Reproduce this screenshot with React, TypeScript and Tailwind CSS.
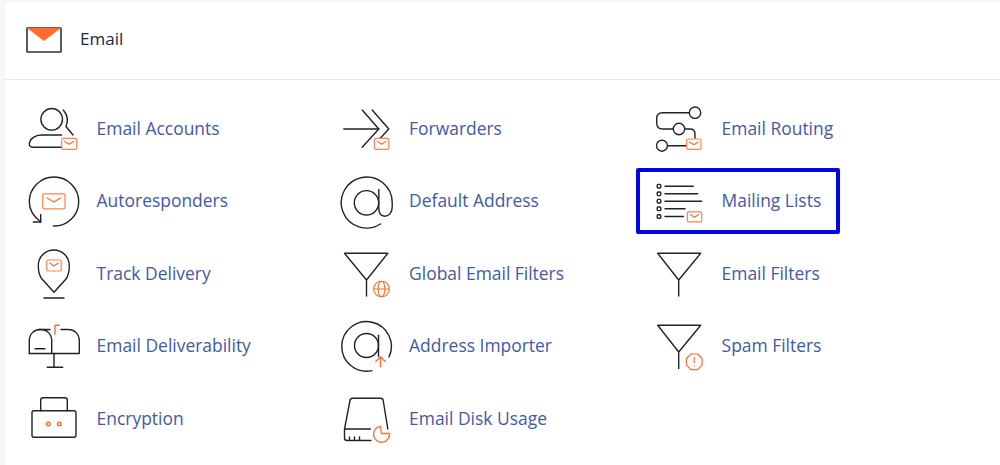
import React from 'react';

const ORANGE = '#ff6c2c';

// small envelope badge used on most of the icons
const Mail = ({ x, y, w, h }: { x: number; y: number; w: number; h: number }) => (
  <g stroke={ORANGE} fill="none" strokeWidth="1.2">
    <rect x={x} y={y} width={w} height={h} rx="1.6" fill="#fff" strokeOpacity="0.85" />
    <path d={`M${x + w * 0.2} ${y + h * 0.28} L${x + w / 2} ${y + h * 0.55} L${x + w * 0.8} ${y + h * 0.28}`} />
  </g>
);

const Icon = ({ children }: { children: React.ReactNode }) => (
  <svg width="60" height="60" viewBox="0 0 60 60" fill="none" stroke="#222" strokeWidth="1.4" strokeLinecap="round" strokeLinejoin="round" className="shrink-0">
    {children}
  </svg>
);

const EmailAccounts = () => (
  <Icon>
    <circle cx="27.7" cy="21.3" r="10.8" />
    <path d="M39.3 12 C43.5 17 44.5 23 42 28.5 L49 37" />
    <path d="M37.5 37 H17.5 C11 37 5.5 41 5.3 46 C5.2 48 6.5 49.2 8.5 49.2 H37.5" />
    <Mail x={37.7} y={40.3} w={15} h={11} />
  </Icon>
);

const Forwarders = () => (
  <Icon>
    <path d="M6.8 31 H41.8" />
    <path d="M25.2 12 L41.8 31 L25.2 49.3" />
    <path d="M35.2 12 L51.8 31 L43.5 40" />
    <Mail x={37.5} y={40.3} w={14.3} h={11} />
  </Icon>
);

const EmailRouting = () => (
  <Icon>
    <circle cx="46" cy="14.7" r="5.7" />
    <path d="M40.3 14.7 H13.5 C10 14.7 7.7 17 7.7 20.5 V25 C7.7 28.7 10 31 13.5 31 H24.3" />
    <circle cx="30" cy="31" r="5.7" />
    <path d="M35.7 31 H41 C44 31 46 33 46 36 V40" />
    <circle cx="13" cy="47.7" r="5.5" />
    <path d="M18.5 47.7 H37" />
    <Mail x={37.7} y={41} w={14.3} h={10.3} />
  </Icon>
);

const Autoresponders = () => (
  <Icon>
    <path d="M29.5 56 C43 56.5 54.7 45.5 54.7 31.7 C54.7 18 43.5 7 30 7 C16.5 7 5.3 18 5.3 31.7 C5.3 39 9.5 46.5 16.7 51.8" />
    <path d="M16.7 44.5 V52 H9.3" />
    <Mail x={18.7} y={23.8} w={22.3} h={15} />
  </Icon>
);

const DefaultAddress = () => (
  <Icon>
    <circle cx="29.5" cy="32.8" r="12.2" />
    <path d="M43.5 54 A25.5 25.5 0 1 1 55.2 32.8 V37 C55.2 42.5 52 46.2 48 46.2 C44 46.2 41.8 43 41.8 38 V19.5" />
  </Icon>
);

const MailingLists = () => (
  <Icon>
    {[16.2, 23.8, 31.2, 38.8, 46.5].map((y) => (
      <rect key={y} x="8.2" y={y - 1.8} width="3.6" height="3.6" rx="1" />
    ))}
    <path d="M16 16.2 H44.3 M16 23.8 H48.7 M16 31.2 H52.7 M16 38.8 H36 M16 46.5 H34.3" />
    <Mail x={38.3} y={41.8} w={14.4} h={10} />
  </Icon>
);

const TrackDelivery = () => (
  <Icon>
    <path d="M30 49.3 L18 36 C15.5 33 14.3 27 14.3 22.7 A15.5 15.7 0 0 1 45.3 22.7 C45.3 27 44 33 42 36 Z" />
    <path d="M20 55 H40" />
    <Mail x={22.7} y={17} w={14.6} h={11} />
  </Icon>
);

const Funnel = ({ x0, x1, cx, top = 10.3, bottom = 53 }: { x0: number; x1: number; cx: number; top?: number; bottom?: number }) => (
  <path d={`M${x0} ${top} H${x1} L${cx} 37 Z M${cx} 37 V${bottom}`} />
);

const GlobalFilters = () => (
  <Icon>
    <Funnel x0={7.5} x1={50.8} cx={29.5} />
    <g stroke={ORANGE} strokeWidth="1.1">
      <circle cx="44.5" cy="46" r="7.8" fill="#fff" />
      <ellipse cx="44.5" cy="46" rx="3.4" ry="7.8" />
      <path d="M36.7 46 H52.3" />
    </g>
  </Icon>
);

const EmailFilters = () => (
  <Icon>
    <Funnel x0={8.7} x1={51.7} cx={29.7} />
  </Icon>
);

const Deliverability = () => (
  <Icon>
    <path d="M5.3 38.5 V26 C5.3 19 10 14.5 16.5 14.5 C23 14.5 27.7 19 27.7 26 V38.5" />
    <path d="M14.3 14.5 H26 M37 14.5 H44 C50.5 14.5 55.3 19 55.3 26 V38.5 H5.3" />
    <path d="M30 38.5 V52.2 M23.3 52.2 H38.7 M11 33.8 H21" />
    <path d="M31 19.5 V10.2 H35.3" stroke={ORANGE} />
  </Icon>
);

const AddressImporter = () => (
  <Icon>
    <circle cx="29.5" cy="30.5" r="12" />
    <path d="M41.5 20.2 V41.2" />
    <path d="M35 55.6 A24.8 24.8 0 1 1 52 42" />
    <path d="M43.5 51.8 V41.8 M38.8 46.5 L43.5 41.8 L48.2 46.5" stroke={ORANGE} strokeWidth="1.3" />
  </Icon>
);

const SpamFilters = () => (
  <Icon>
    <Funnel x0={8.7} x1={51.7} cx={29.7} bottom={53.5} />
    <g stroke={ORANGE} strokeWidth="1.2">
      <path d="M42 39 H48.6 L53.1 43.5 V50.1 L48.6 54.6 H42 L37.5 50.1 V43.5 Z" fill="#fff" />
      <path d="M45.3 42.5 V48 M45.3 50.8 V51" />
    </g>
  </Icon>
);

const Encryption = () => (
  <Icon>
    <rect x="8" y="22.7" width="44" height="26.6" rx="2" />
    <path d="M16.7 22.7 V12 C16.7 10.5 17.5 9.7 19 9.7 H41 C42.5 9.7 43.3 10.5 43.3 12 V22.7" />
    <circle cx="24.3" cy="36" r="1.8" stroke={ORANGE} />
    <circle cx="35.3" cy="36" r="1.8" stroke={ORANGE} />
  </Icon>
);

const DiskUsage = () => (
  <Icon>
    <path d="M7.5 41 L13 12.5 C13.3 11 14.2 10.3 15.5 10.3 H43.5 C45 10.3 46 11 46.2 12.5 L50.8 41" />
    <path d="M7.5 41 H33.5 M7.5 41 V50 C7.5 51.5 8.5 52.5 10 52.5 H34 M12.5 49 V52.5 M17.5 49 V52.5 M22.5 49 V52.5" />
    <path d="M43.5 38.3 L44.5 45.5 H52.5 A8 8 0 1 1 43.5 38.3 Z" stroke={ORANGE} strokeWidth="1.3" fill="#fff" />
  </Icon>
);

const items = [
  { label: 'Email Accounts', icon: <EmailAccounts /> },
  { label: 'Forwarders', icon: <Forwarders /> },
  { label: 'Email Routing', icon: <EmailRouting /> },
  { label: 'Autoresponders', icon: <Autoresponders /> },
  { label: 'Default Address', icon: <DefaultAddress /> },
  { label: 'Mailing Lists', icon: <MailingLists />, highlighted: true },
  { label: 'Track Delivery', icon: <TrackDelivery /> },
  { label: 'Global Email Filters', icon: <GlobalFilters /> },
  { label: 'Email Filters', icon: <EmailFilters /> },
  { label: 'Email Deliverability', icon: <Deliverability /> },
  { label: 'Address Importer', icon: <AddressImporter /> },
  { label: 'Spam Filters', icon: <SpamFilters /> },
  { label: 'Encryption', icon: <Encryption /> },
  { label: 'Email Disk Usage', icon: <DiskUsage /> },
];

export default function App() {
  return (
    <div className="h-[465px] overflow-hidden bg-[#f6f6f6] pl-[5px] pt-[2px] font-['Open_Sans',sans-serif]">
      <div className="h-full rounded-tl-[5px] bg-white">
        <div className="flex h-[78px] items-center gap-[17px] border-b border-[#e6e8f3] pl-[21px]">
          <svg width="37" height="27" viewBox="0 0 37 27" className="shrink-0">
            <rect x="1" y="1" width="34" height="24" rx="0.5" fill="#fff" stroke="#333" strokeWidth="1.6" />
            <path d="M1 1 H35 L18 14 Z" fill={ORANGE} />
          </svg>
          <h2 className="pb-[4px] text-[17px] text-[#1d2748]">Email</h2>
        </div>
        <div className="grid grid-cols-[repeat(3,312.5px)] auto-rows-[72.5px] pl-[6px] pt-[11.6px]">
          {items.map((item) => (
            <a key={item.label} href="#" className="relative flex items-center gap-[12.6px] pl-[13px] text-[17.45px] text-[#3f5aa8]">
              {item.icon}
              <span>{item.label}</span>
              {item.highlighted && (
                <span className="absolute left-[-0.4px] top-[4px] h-[66px] w-[204px] rounded-[2px] border-[4px] border-[#0404e6]" />
              )}
            </a>
          ))}
        </div>
      </div>
    </div>
  );
}
